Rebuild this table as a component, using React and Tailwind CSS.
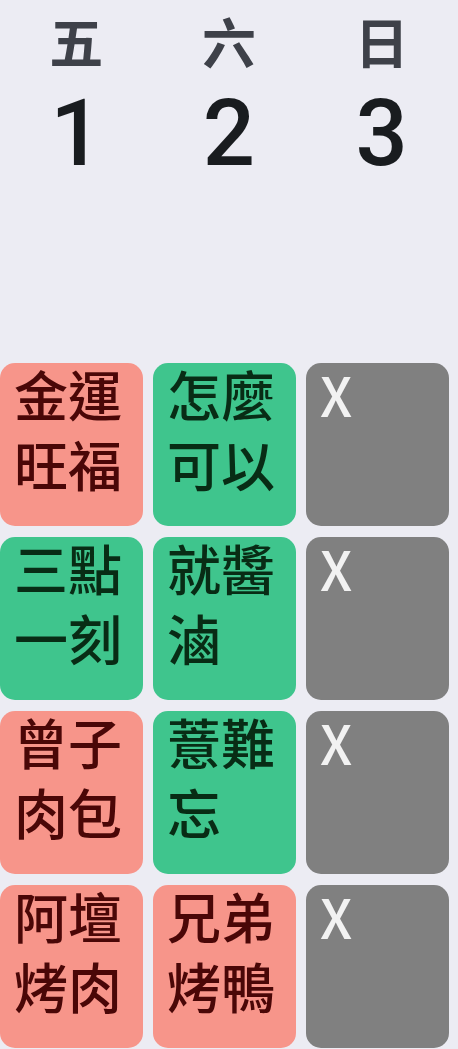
const days = [
  { label: '五', num: '1' },
  { label: '六', num: '2' },
  { label: '日', num: '3' },
];

const rows = [
  [
    { text: ['金運', '旺福'], tone: 'red' },
    { text: ['怎麼', '可以'], tone: 'green' },
    { text: ['X'], tone: 'gray' },
  ],
  [
    { text: ['三點', '一刻'], tone: 'green' },
    { text: ['就醬', '滷'], tone: 'green' },
    { text: ['X'], tone: 'gray' },
  ],
  [
    { text: ['曾子', '肉包'], tone: 'red' },
    { text: ['薏難', '忘'], tone: 'green' },
    { text: ['X'], tone: 'gray' },
  ],
  [
    { text: ['阿壇', '烤肉'], tone: 'red' },
    { text: ['兄弟', '烤鴨'], tone: 'red' },
    { text: ['X'], tone: 'gray' },
  ],
];

const toneClass = {
  red: 'bg-[#f7958a] text-[#4a0707]',
  green: 'bg-[#3fc58d] text-[#082c15]',
  gray: 'bg-[#808080] text-[#f2f2f2]',
};

function Cell({ cell }) {
  return (
    <div className={`flex h-[163px] flex-col rounded-[15px] pl-[14px] ${toneClass[cell.tone]}`}>
      <div className="-mt-[4px]">
        {cell.text.map((line, i) => (
          <div
            key={i}
            className="text-[54px] leading-[70px] font-medium [font-family:'Noto_Sans_CJK_TC',sans-serif]"
          >
            {line}
          </div>
        ))}
      </div>
    </div>
  );
}

export default function App() {
  return (
    <div className="min-h-[1049px] w-[458px] overflow-hidden bg-[#ececf3]">
      <div className="grid grid-cols-3 pt-[14px]">
        {days.map((d) => (
          <div key={d.num} className="flex flex-col items-center">
            <div className="text-[54px] leading-[54px] font-bold text-[#3e4149] [font-family:'Noto_Sans_CJK_TC',sans-serif]">
              {d.label}
            </div>
            <div className="mt-[20px] text-[92px] leading-[92px] font-medium text-[#191c1f] [font-family:Roboto,sans-serif]">
              {d.num}
            </div>
          </div>
        ))}
      </div>

      <div className="mt-[183px] grid grid-cols-[143px_143px_143px] gap-x-[10px] gap-y-[11px]">
        {rows.flat().map((cell, i) => (
          <Cell key={i} cell={cell} />
        ))}
      </div>
    </div>
  );
}
